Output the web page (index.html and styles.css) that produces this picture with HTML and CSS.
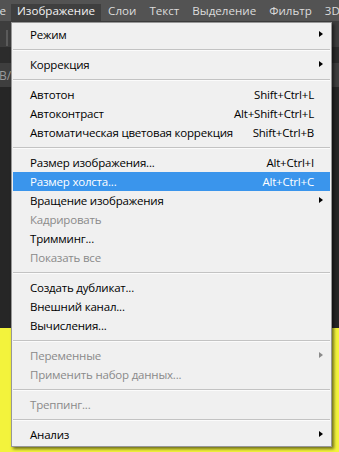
FILE: index.html
```html
<!DOCTYPE html>
<html lang="ru">
<head>
<meta charset="utf-8">
<title>Изображение</title>
<link rel="stylesheet" href="styles.css">
</head>
<body>
<div class="app">
  <nav class="menubar">
    <span class="mb-item mb-cut">е</span>
    <span class="mb-item mb-active">Изображение</span>
    <span class="mb-item">Слои</span>
    <span class="mb-item">Текст</span>
    <span class="mb-item">Выделение</span>
    <span class="mb-item">Фильтр</span>
    <span class="mb-item">3D</span>
  </nav>
  <div class="workspace">
    <div class="options-bar"><span class="grip"></span></div>
    <div class="gap-dark"></div>
    <div class="tabbar"><span class="tab-label">B/</span></div>
    <div class="doc-dark"></div>
    <div class="canvas"></div>

    <div class="menu">
      <div class="item sub"><span class="label">Режим</span><span class="arrow"></span></div>
      <div class="sep"></div>
      <div class="item sub"><span class="label">Коррекция</span><span class="arrow"></span></div>
      <div class="sep"></div>
      <div class="item"><span class="label">Автотон</span><span class="key">Shift+Ctrl+L</span><span class="arrow none"></span></div>
      <div class="item"><span class="label">Автоконтраст</span><span class="key">Alt+Shift+Ctrl+L</span><span class="arrow none"></span></div>
      <div class="item"><span class="label">Автоматическая цветовая коррекция</span><span class="key">Shift+Ctrl+B</span><span class="arrow none"></span></div>
      <div class="sep"></div>
      <div class="item"><span class="label">Размер изображения...</span><span class="key">Alt+Ctrl+I</span><span class="arrow none"></span></div>
      <div class="item active"><span class="label">Размер холста...</span><span class="key">Alt+Ctrl+C</span><span class="arrow none"></span></div>
      <div class="item sub"><span class="label">Вращение изображения</span><span class="arrow"></span></div>
      <div class="item disabled"><span class="label">Кадрировать</span></div>
      <div class="item"><span class="label">Тримминг...</span></div>
      <div class="item disabled"><span class="label">Показать все</span></div>
      <div class="sep"></div>
      <div class="item"><span class="label">Создать дубликат...</span></div>
      <div class="item"><span class="label">Внешний канал...</span></div>
      <div class="item"><span class="label">Вычисления...</span></div>
      <div class="sep"></div>
      <div class="item disabled sub"><span class="label">Переменные</span><span class="arrow"></span></div>
      <div class="item disabled"><span class="label">Применить набор данных...</span></div>
      <div class="sep"></div>
      <div class="item disabled"><span class="label">Треппинг...</span></div>
      <div class="sep"></div>
      <div class="item sub"><span class="label">Анализ</span><span class="arrow"></span></div>
    </div>
  </div>
</div>
</body>
</html>
```
FILE: styles.css
```css
* { box-sizing: border-box; }
html, body { margin: 0; padding: 0; }
body {
  width: 339px;
  height: 452px;
  overflow: hidden;
  background: #262626;
  font-family: "Open Sans", "Noto Sans", sans-serif;
}
.app { width: 339px; height: 452px; display: flex; flex-direction: column; }

.menubar {
  height: 21px;
  flex: none;
  background: #535353;
  display: flex;
  align-items: stretch;
  white-space: nowrap;
  overflow: hidden;
  font-size: 11.6px;
  color: #dcdcdc;
}
.mb-item { display: flex; align-items: center; padding: 0 6px 1px 7px; flex: none; }
.mb-cut { width: 11px; padding: 0 0 1px 0; justify-content: flex-end; overflow: hidden; }
.mb-cut::after { content: ""; width: 5px; flex: none; }
.mb-active {
  background: #3f3f3f;
  color: #f2f2f2;
  margin-top: 4px;
  padding: 0 6px 4px 6px;
}

.workspace { position: relative; flex: 1; display: flex; flex-direction: column; }
.options-bar { height: 26px; background: #3d3d3d; flex: none; position: relative; }
.grip { position: absolute; left: 6px; top: 9px; width: 2px; height: 16px; background: #5a5a5a; }
.gap-dark { height: 16px; background: #2c2c2c; flex: none; }
.tabbar { height: 24px; background: #3e3e3e; flex: none; display: flex; align-items: center; }
.tab-label { font-size: 12px; color: #9a9a9a; margin-left: -1px; }
.doc-dark { height: 241px; background: #262626; flex: none; }
.canvas { flex: 1; background: #f3f33c; }

.menu {
  position: absolute;
  left: 11px;
  top: 1px;
  width: 321px;
  background: #f0f0f0;
  border: 1px solid #979797;
  padding: 2px 1px;
  box-shadow: 2px 2px 3px rgba(0, 0, 0, 0.55);
  font-size: 11.5px;
  letter-spacing: -0.2px;
  color: #000;
}
.item {
  height: 19px;
  display: flex;
  align-items: center;
  padding-left: 17px;
  white-space: nowrap;
}
.item .label { flex: 1; }
.item .key { padding-right: 0; }
.item .arrow {
  width: 16px;
  height: 19px;
  flex: none;
  position: relative;
}
.item .arrow::after {
  content: "";
  position: absolute;
  left: 5px;
  top: 6px;
  border-left: 4px solid #000;
  border-top: 3.5px solid transparent;
  border-bottom: 3.5px solid transparent;
}
.item .arrow.none::after { display: none; }
.item.disabled { color: #8a8a8a; }
.item.disabled .arrow::after { border-left-color: #8a8a8a; }
.item.active { background: #3a95ec; color: #fff; }
.sep {
  height: 11px;
  display: flex;
  flex-direction: column;
  justify-content: center;
}
.sep::before {
  content: "";
  display: block;
  height: 1px;
  background: #c3c3c3;
  border-bottom: 1px solid #fbfbfb;
  box-sizing: content-box;
}
```
